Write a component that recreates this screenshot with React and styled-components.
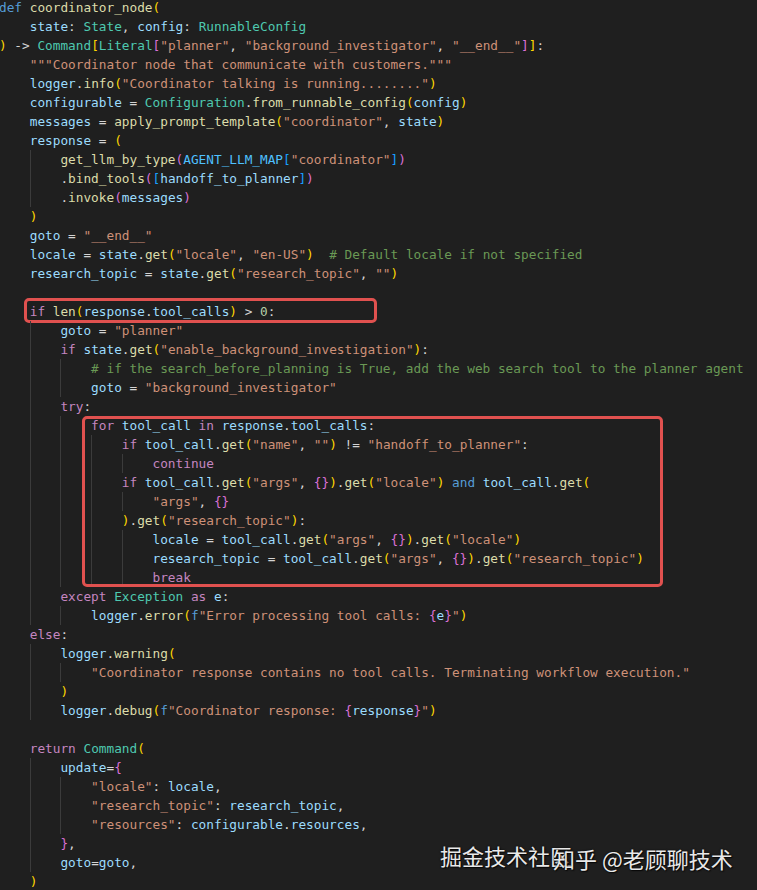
import React from "react";
import styled, { createGlobalStyle } from "styled-components";

const C = {
  kw: "#569cd6",
  ctl: "#c586c0",
  fn: "#dcdcaa",
  v: "#9cdcfe",
  s: "#ce9178",
  cls: "#4ec9b0",
  cm: "#6a9955",
  n: "#b5cea8",
  p: "#d4d4d4",
  k: "#4fc1ff",
  b1: "#ffd700",
  b2: "#da70d6",
  b3: "#179fff",
};

const Global = createGlobalStyle`
  html, body { margin: 0; padding: 0; background: #1f1f1f; }
`;

const Page = styled.div`
  position: relative;
  width: 757px;
  height: 890px;
  overflow: hidden;
  background: #1f1f1f;
`;

const Code = styled.div`
  display: flex;
  flex-direction: column;
  margin: -2px 0 0 -1px;
  font-family: "DejaVu Sans Mono", "Liberation Mono", monospace;
  font-size: 12.75px;
  color: ${C.p};
`;

const Segment = styled.div`
  position: relative;
  display: flex;
  flex-direction: column;
  ${(p) =>
    p.$box &&
    `
    &::after {
      content: "";
      position: absolute;
      left: ${p.$box.x}px;
      width: ${p.$box.w}px;
      top: ${p.$box.t}px;
      bottom: ${p.$box.b}px;
      border: 3px solid #e0514f;
      border-radius: 5px;
      box-sizing: border-box;
      pointer-events: none;
    }
  `}
`;

const Line = styled.div`
  display: flex;
  height: 19px;
  line-height: 19px;
  white-space: pre;
`;

const Guide = styled.span`
  display: inline-block;
  width: 4ch;
  height: 19px;
  flex: none;
  box-shadow: inset 1px 0 0 #3b3b3b;
`;

const Tok = styled.span`
  color: ${(p) => p.$c};
`;

const Watermark = styled.div`
  position: absolute;
  left: 440px;
  bottom: 24px;
  display: flex;
  align-items: flex-end;
  font-family: "Noto Sans CJK SC", "Noto Sans", sans-serif;
  font-size: 22px;
  line-height: 22px;
  color: #e9e9e9;
  white-space: nowrap;
  text-shadow: 0 0 2px rgba(0, 0, 0, 0.9), 1px 1px 1px rgba(0, 0, 0, 0.7);
`;

const MarkText = styled.span`
  margin-left: ${(p) => p.$overlap || 0}px;
  transform: translateY(${(p) => p.$drop || 0}px);
`;

// token helpers
const t = (c, s) => [c, s];
const P = (s) => t(C.p, s);
const V = (s) => t(C.v, s);
const S = (s) => t(C.s, s);
const F = (s) => t(C.fn, s);
const K = (s) => t(C.ctl, s);
const T = (s) => t(C.cls, s);
const B1 = (s) => t(C.b1, s);
const B2 = (s) => t(C.b2, s);
const B3 = (s) => t(C.b3, s);

const head = [
  [0, [t(C.kw, "def"), P(" "), F("coordinator_node"), B1("(")]],
  [1, [V("state"), P(": "), T("State"), P(", "), V("config"), P(": "), T("RunnableConfig")]],
  [0, [B1(")"), P(" -> "), T("Command"), B1("["), T("Literal"), B2("["), S('"planner"'), P(", "), S('"background_investigator"'), P(", "), S('"__end__"'), B2("]"), B1("]"), P(":")]],
  [1, [S('"""Coordinator node that communicate with customers."""')]],
  [1, [V("logger"), P("."), F("info"), B1("("), S('"Coordinator talking is running........"'), B1(")")]],
  [1, [V("configurable"), P(" = "), T("Configuration"), P("."), F("from_runnable_config"), B1("("), V("config"), B1(")")]],
  [1, [V("messages"), P(" = "), F("apply_prompt_template"), B1("("), S('"coordinator"'), P(", "), V("state"), B1(")")]],
  [1, [V("response"), P(" = "), B1("(")]],
  [2, [F("get_llm_by_type"), B2("("), t(C.k, "AGENT_LLM_MAP"), B3("["), S('"coordinator"'), B3("]"), B2(")")]],
  [2, [P("."), F("bind_tools"), B2("("), B3("["), V("handoff_to_planner"), B3("]"), B2(")")]],
  [2, [P("."), F("invoke"), B2("("), V("messages"), B2(")")]],
  [1, [B1(")")]],
  [1, [V("goto"), P(" = "), S('"__end__"')]],
  [1, [V("locale"), P(" = "), V("state"), P("."), F("get"), B1("("), S('"locale"'), P(", "), S('"en-US"'), B1(")"), P("  "), t(C.cm, "# Default locale if not specified")]],
  [1, [V("research_topic"), P(" = "), V("state"), P("."), F("get"), B1("("), S('"research_topic"'), P(", "), S('""'), B1(")")]],
  [1, []],
];

const ifLine = [
  [1, [K("if"), P(" "), F("len"), B1("("), V("response"), P("."), V("tool_calls"), B1(")"), P(" > "), t(C.n, "0"), P(":")]],
];

const middle = [
  [2, [V("goto"), P(" = "), S('"planner"')]],
  [2, [K("if"), P(" "), V("state"), P("."), F("get"), B1("("), S('"enable_background_investigation"'), B1(")"), P(":")]],
  [3, [t(C.cm, "# if the search_before_planning is True, add the web search tool to the planner agent")]],
  [3, [V("goto"), P(" = "), S('"background_investigator"')]],
  [2, [K("try"), P(":")]],
];

const loop = [
  [3, [K("for"), P(" "), V("tool_call"), P(" "), K("in"), P(" "), V("response"), P("."), V("tool_calls"), P(":")]],
  [4, [K("if"), P(" "), V("tool_call"), P("."), F("get"), B1("("), S('"name"'), P(", "), S('""'), B1(")"), P(" != "), S('"handoff_to_planner"'), P(":")]],
  [5, [K("continue")]],
  [4, [K("if"), P(" "), V("tool_call"), P("."), F("get"), B1("("), S('"args"'), P(", "), B2("{}"), B1(")"), P("."), F("get"), B1("("), S('"locale"'), B1(")"), P(" "), t(C.kw, "and"), P(" "), V("tool_call"), P("."), F("get"), B1("(")]],
  [5, [S('"args"'), P(", "), B2("{}")]],
  [4, [B1(")"), P("."), F("get"), B1("("), S('"research_topic"'), B1(")"), P(":")]],
  [5, [V("locale"), P(" = "), V("tool_call"), P("."), F("get"), B1("("), S('"args"'), P(", "), B2("{}"), B1(")"), P("."), F("get"), B1("("), S('"locale"'), B1(")")]],
  [5, [V("research_topic"), P(" = "), V("tool_call"), P("."), F("get"), B1("("), S('"args"'), P(", "), B2("{}"), B1(")"), P("."), F("get"), B1("("), S('"research_topic"'), B1(")")]],
  [5, [K("break")]],
];

const tail = [
  [2, [K("except"), P(" "), T("Exception"), P(" "), K("as"), P(" "), V("e"), P(":")]],
  [3, [V("logger"), P("."), F("error"), B1("("), t(C.kw, "f"), S('"Error processing tool calls: '), B2("{"), V("e"), B2("}"), S('"'), B1(")")]],
  [1, [K("else"), P(":")]],
  [2, [V("logger"), P("."), F("warning"), B1("(")]],
  [3, [S('"Coordinator response contains no tool calls. Terminating workflow execution."')]],
  [2, [B1(")")]],
  [2, [V("logger"), P("."), F("debug"), B1("("), t(C.kw, "f"), S('"Coordinator response: '), B2("{"), V("response"), B2("}"), S('"'), B1(")")]],
  [1, []],
  [1, [K("return"), P(" "), T("Command"), B1("(")]],
  [2, [V("update"), P("="), B2("{")]],
  [3, [S('"locale"'), P(": "), V("locale"), P(",")]],
  [3, [S('"research_topic"'), P(": "), V("research_topic"), P(",")]],
  [3, [S('"resources"'), P(": "), V("configurable"), P("."), V("resources"), P(",")]],
  [2, [B2("}"), P(",")]],
  [2, [V("goto"), P("="), V("goto"), P(",")]],
  [1, [B1(")")]],
];

const segments = [
  { lines: head },
  { lines: ifLine, box: { x: 25, w: 353, t: -4, b: -2 } },
  { lines: middle },
  { lines: loop, box: { x: 83, w: 581, t: 0, b: 0 } },
  { lines: tail },
];

function CodeLine({ indent, toks }) {
  return (
    <Line>
      {Array.from({ length: indent }).map((_, g) => (
        <Guide key={g} />
      ))}
      {toks.map(([c, s], j) => (
        <Tok key={j} $c={c}>
          {s}
        </Tok>
      ))}
    </Line>
  );
}

export default function App() {
  return (
    <>
      <Global />
      <Page>
        <Code>
          {segments.map((seg, i) => (
            <Segment key={i} $box={seg.box}>
              {seg.lines.map(([indent, toks], j) => (
                <CodeLine key={j} indent={indent} toks={toks} />
              ))}
            </Segment>
          ))}
        </Code>
        <Watermark>
          <MarkText>掘金技术社区</MarkText>
          <MarkText $overlap={-19} $drop={3}>知乎 @老顾聊技术</MarkText>
        </Watermark>
      </Page>
    </>
  );
}
